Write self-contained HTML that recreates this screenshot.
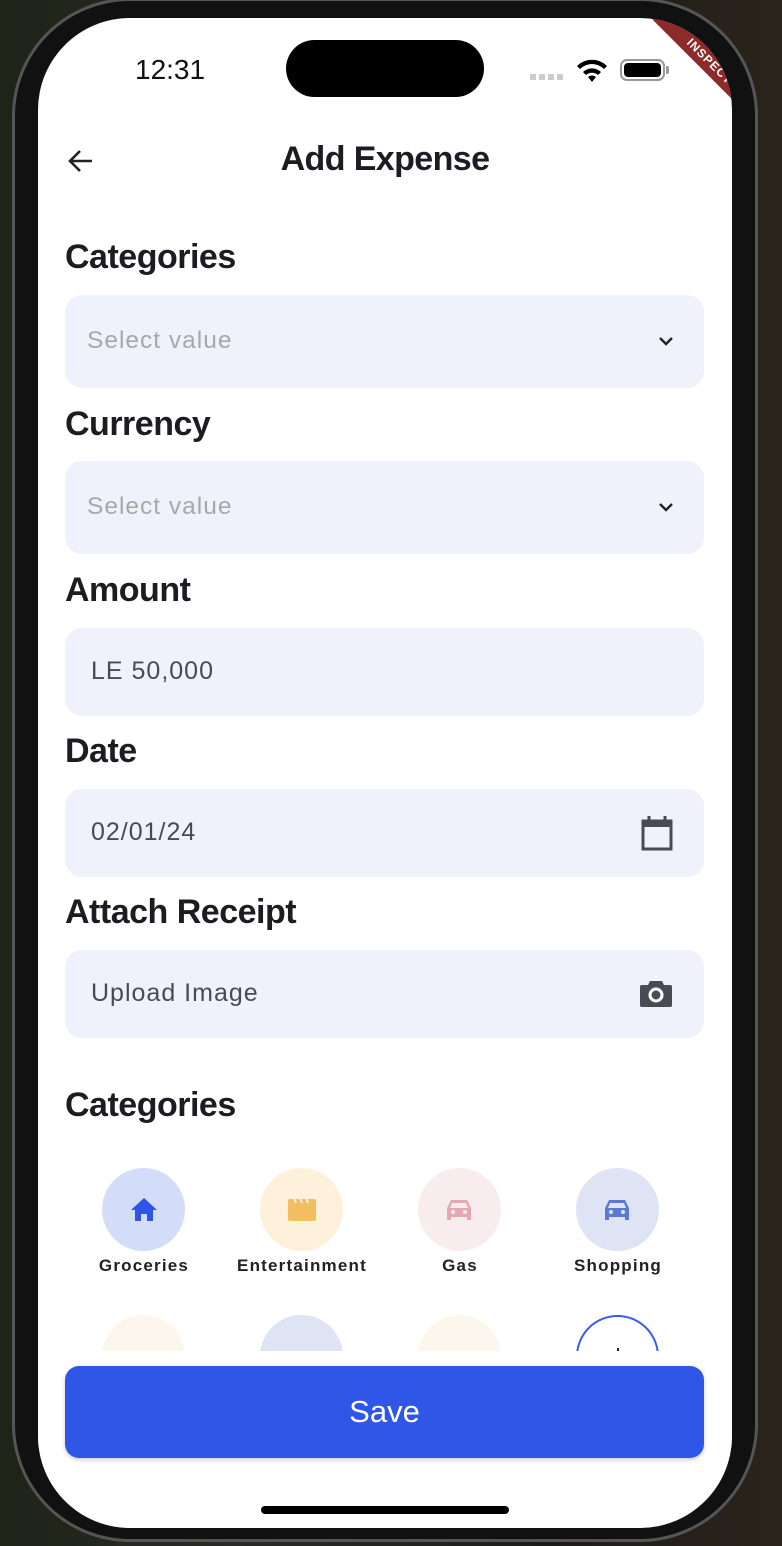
<!DOCTYPE html>
<html><head><meta charset="utf-8">
<style>
*{margin:0;padding:0;box-sizing:border-box}
body{width:782px;height:1546px;overflow:hidden;background:linear-gradient(90deg,#1d2418,#2a2b22 30%,#1e1c16 70%,#2a241c);font-family:"Liberation Sans",sans-serif;position:relative}
.frame{position:absolute;left:12px;top:-2px;width:746px;height:1544px;border-radius:118px;background:#111;border:3px solid #555}
.screen{position:absolute;left:38px;top:18px;width:694px;height:1510px;border-radius:92px;background:#fff;overflow:hidden}
.abs{position:absolute}
.lbl{position:absolute;left:27px;font-size:34px;font-weight:bold;color:#1c1c22;letter-spacing:-0.5px}
.fld{position:absolute;left:27px;width:639px;background:#eff2fb;border-radius:17px}
.fld span{position:absolute;left:26px;font-size:25px;letter-spacing:1px;color:#4a4a55}
.ph{color:#a8a8a8!important;left:22px!important;font-size:24.5px!important}
.cat{position:absolute;width:83px;height:83px;border-radius:50%;top:1150px}
.cl{position:absolute;top:1238px;width:160px;text-align:center;font-size:17px;font-weight:bold;letter-spacing:1.2px;color:#222}
</style></head><body>
<div class="frame"></div>
<div class="screen">
  <div class="abs" style="left:97px;top:36px;font-size:28px;color:#111">12:31</div>
  <div class="abs" style="left:248px;top:22px;width:198px;height:57px;border-radius:29px;background:#000"></div>
  <div class="abs" style="left:492px;top:56px;width:34px;height:6px;background:repeating-linear-gradient(90deg,#ccc 0 6px,transparent 6px 9px)"></div>
  <svg class="abs" style="left:537px;top:38px" width="34" height="28" viewBox="0 0 34 26"><path d="M17 25l-4-5a6 6 0 0 1 8 0z M8 15a13 13 0 0 1 18 0l-3 3a9 9 0 0 0-12 0z M2 9a21 21 0 0 1 30 0l-3 3a17 17 0 0 0-24 0z" fill="#000"/></svg>
  <div class="abs" style="left:582px;top:41px;width:45px;height:22px;border:2px solid #999;border-radius:7px;padding:2px"><div style="width:100%;height:100%;background:#000;border-radius:4px"></div></div>
  <div class="abs" style="left:628px;top:48px;width:3px;height:8px;background:#999;border-radius:0 2px 2px 0"></div>
  <div class="abs" style="width:160px;height:22px;background:#8e2a2a;transform:rotate(45deg);transform-origin:0 0;left:630px;top:-14px;color:#fff;font-size:12px;font-weight:bold;text-align:center;line-height:22px;letter-spacing:1px">INSPECTOR</div>
  <svg class="abs" style="left:28px;top:128px" width="30" height="30" viewBox="0 0 30 30"><path d="M26 15H5M14 5L4 15l10 10" stroke="#222" stroke-width="2.6" fill="none"/></svg>
  <div class="abs" style="left:0;width:694px;top:122px;text-align:center;font-size:34px;font-weight:bold;color:#1c1c22;letter-spacing:-0.6px">Add Expense</div>

  <div class="lbl" style="top:220px">Categories</div>
  <div class="fld" style="top:277px;height:93px"><span class="ph" style="top:32px">Select value</span>
   <svg class="abs" style="left:592px;top:40px" width="18" height="12" viewBox="0 0 18 12"><path d="M3 3l6 6 6-6" stroke="#222" stroke-width="2.4" fill="none"/></svg></div>
  <div class="lbl" style="top:387px">Currency</div>
  <div class="fld" style="top:443px;height:93px"><span class="ph" style="top:32px">Select value</span>
   <svg class="abs" style="left:592px;top:40px" width="18" height="12" viewBox="0 0 18 12"><path d="M3 3l6 6 6-6" stroke="#222" stroke-width="2.4" fill="none"/></svg></div>
  <div class="lbl" style="top:553px">Amount</div>
  <div class="fld" style="top:610px;height:88px"><span style="top:29px">LE 50,000</span></div>
  <div class="lbl" style="top:714px">Date</div>
  <div class="fld" style="top:771px;height:88px"><span style="top:29px">02/01/24</span>
   <svg class="abs" style="left:574px;top:25px" width="36" height="38" viewBox="0 0 36 38"><path d="M4 7h28v28H4z" stroke="#4a4a55" stroke-width="3" fill="none"/><path d="M4 7h28v6H4z" fill="#4a4a55"/><path d="M10 2v6M26 2v6" stroke="#4a4a55" stroke-width="3"/></svg></div>
  <div class="lbl" style="top:875px">Attach Receipt</div>
  <div class="fld" style="top:932px;height:88px"><span style="top:29px">Upload Image</span>
   <svg class="abs" style="left:574px;top:28px" width="34" height="30" viewBox="0 0 34 30"><path d="M11 3h12l2 4h6a2 2 0 0 1 2 2v18a2 2 0 0 1-2 2H3a2 2 0 0 1-2-2V9a2 2 0 0 1 2-2h6z" fill="#4a4a55"/><circle cx="17" cy="17" r="6" fill="none" stroke="#fff" stroke-width="3"/></svg></div>

  <div class="lbl" style="top:1068px">Categories</div>
  <div class="cat" style="left:64px;background:#d4ddf8"></div>
  <svg class="abs" style="left:92px;top:1178px" width="28" height="26" viewBox="0 0 28 26"><path d="M14 2L1 14h4v11h6v-7h6v7h6V14h4z" fill="#2f55e8"/></svg>
  <div class="cat" style="left:222px;background:#fdf1dc"></div>
  <svg class="abs" style="left:249px;top:1178px" width="30" height="26" viewBox="0 0 30 26"><rect x="1" y="3" width="28" height="22" rx="2" fill="#f3bd62"/><path d="M7 2l2 5M13 2l2 5M19 2l2 5" stroke="#fdf1dc" stroke-width="2"/></svg>
  <div class="cat" style="left:380px;background:#f9ecee"></div>
  <svg class="abs" style="left:407px;top:1178px" width="28" height="28" viewBox="0 0 28 28"><path d="M6 4h16l4 8v12h-4v-3H6v3H2V12z" fill="#e3a8b0"/><path d="M7 7h14l2 5H5z" fill="#f9ecee"/><circle cx="8" cy="16" r="2" fill="#f9ecee"/><circle cx="20" cy="16" r="2" fill="#f9ecee"/></svg>
  <div class="cat" style="left:538px;background:#dfe4f5"></div>
  <svg class="abs" style="left:565px;top:1178px" width="28" height="28" viewBox="0 0 28 28"><path d="M6 4h16l4 8v12h-4v-3H6v3H2V12z" fill="#5d78cf"/><path d="M7 7h14l2 5H5z" fill="#dfe4f5"/><circle cx="8" cy="16" r="2" fill="#dfe4f5"/><circle cx="20" cy="16" r="2" fill="#dfe4f5"/></svg>
  <div class="cl" style="left:26px">Groceries</div>
  <div class="cl" style="left:184px">Entertainment</div>
  <div class="cl" style="left:342px">Gas</div>
  <div class="cl" style="left:500px">Shopping</div>

  <div class="cat" style="left:64px;top:1297px;background:#fdf6ec"></div>
  <div class="cat" style="left:222px;top:1297px;background:#dfe4f5"></div>
  <div class="cat" style="left:380px;top:1297px;background:#fdf6ec"></div>
  <div class="cat" style="left:538px;top:1297px;border:2px solid #3a5ee8;background:#fff"></div>
  <div class="abs" style="left:579px;top:1330px;width:2px;height:10px;background:#222"></div>
  <div class="abs" style="left:0;top:1333px;width:694px;height:100px;background:#fff"></div>

  <div class="abs" style="left:27px;top:1348px;width:639px;height:92px;border-radius:14px;background:#3056e8;box-shadow:0 2px 4px rgba(0,0,0,.2);color:#fff;font-size:31px;text-align:center;line-height:92px">Save</div>
  <div class="abs" style="left:223px;top:1488px;width:248px;height:8px;border-radius:4px;background:#000"></div>
</div>
</body></html>
